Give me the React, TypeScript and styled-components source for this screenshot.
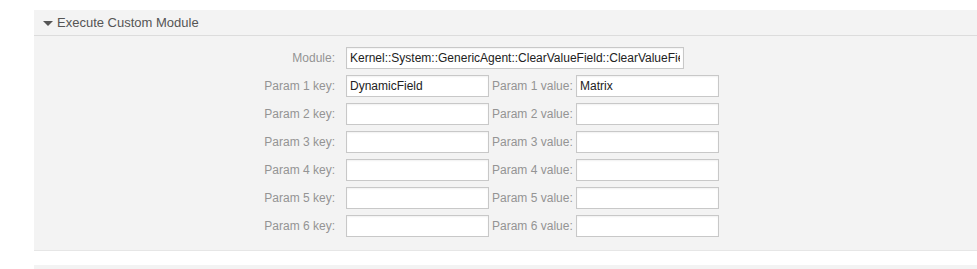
import React from 'react';
import styled, { createGlobalStyle } from 'styled-components';

const GlobalStyle = createGlobalStyle`
  html, body {
    margin: 0;
    padding: 0;
    background: #ffffff;
    font-family: "Liberation Sans", Arial, sans-serif;
  }
`;

const Page = styled.div`
  padding: 10px 0 0 34px;
  width: 977px;
  box-sizing: border-box;
  overflow: hidden;
`;

const Widget = styled.section`
  background: #f3f3f3;
  border-bottom: 1px solid #e6e6e6;
`;

const Header = styled.div`
  display: flex;
  align-items: center;
  height: 25px;
  padding-left: 9px;
  border-bottom: 1px solid #dcdcdc;
  color: #555;
  font-size: 13px;
`;

const Caret = styled.span`
  width: 0;
  height: 0;
  border-left: 5px solid transparent;
  border-right: 5px solid transparent;
  border-top: 5px solid #555;
  margin-right: 4px;
  margin-top: 1px;
`;

const Body = styled.div`
  display: flex;
  flex-direction: column;
  gap: 6px;
  padding: 11px 0 13px;
`;

const Row = styled.div`
  display: flex;
  align-items: center;
  height: 22px;
`;

const Label = styled.label<{ $value?: boolean }>`
  box-sizing: border-box;
  width: ${(p) => (p.$value ? '87px' : '312px')};
  padding: ${(p) => (p.$value ? '0 0 1px 3px' : '0 11px 0 0')};
  text-align: ${(p) => (p.$value ? 'left' : 'right')};
  color: #949494;
  font-size: 12px;
  white-space: nowrap;
`;

const Input = styled.input<{ $wide?: boolean }>`
  box-sizing: border-box;
  width: ${(p) => (p.$wide ? '338px' : '143px')};
  height: 22px;
  margin: 0;
  padding: 0 3px;
  border: 1px solid #c8c8c8;
  background: #fff;
  box-shadow: inset 0 1px 2px rgba(0, 0, 0, 0.06);
  color: #222;
  font-family: "Liberation Sans", Arial, sans-serif;
  font-size: 12px;
  outline: none;
`;

const NextWidget = styled.div`
  margin-top: 14px;
  height: 10px;
  background: #f3f3f3;
`;

const params = [
  { key: 'DynamicField', value: 'Matrix' },
  { key: '', value: '' },
  { key: '', value: '' },
  { key: '', value: '' },
  { key: '', value: '' },
  { key: '', value: '' },
];

export default function App() {
  return (
    <Page>
      <GlobalStyle />
      <Widget>
        <Header>
          <Caret />
          Execute Custom Module
        </Header>
        <Body>
          <Row>
            <Label>Module:</Label>
            <Input $wide readOnly value="Kernel::System::GenericAgent::ClearValueField::ClearValueField" />
          </Row>
          {params.map((p, i) => (
            <Row key={i}>
              <Label>Param {i + 1} key:</Label>
              <Input readOnly value={p.key} />
              <Label $value>Param {i + 1} value:</Label>
              <Input readOnly value={p.value} />
            </Row>
          ))}
        </Body>
      </Widget>
      <NextWidget />
    </Page>
  );
}
